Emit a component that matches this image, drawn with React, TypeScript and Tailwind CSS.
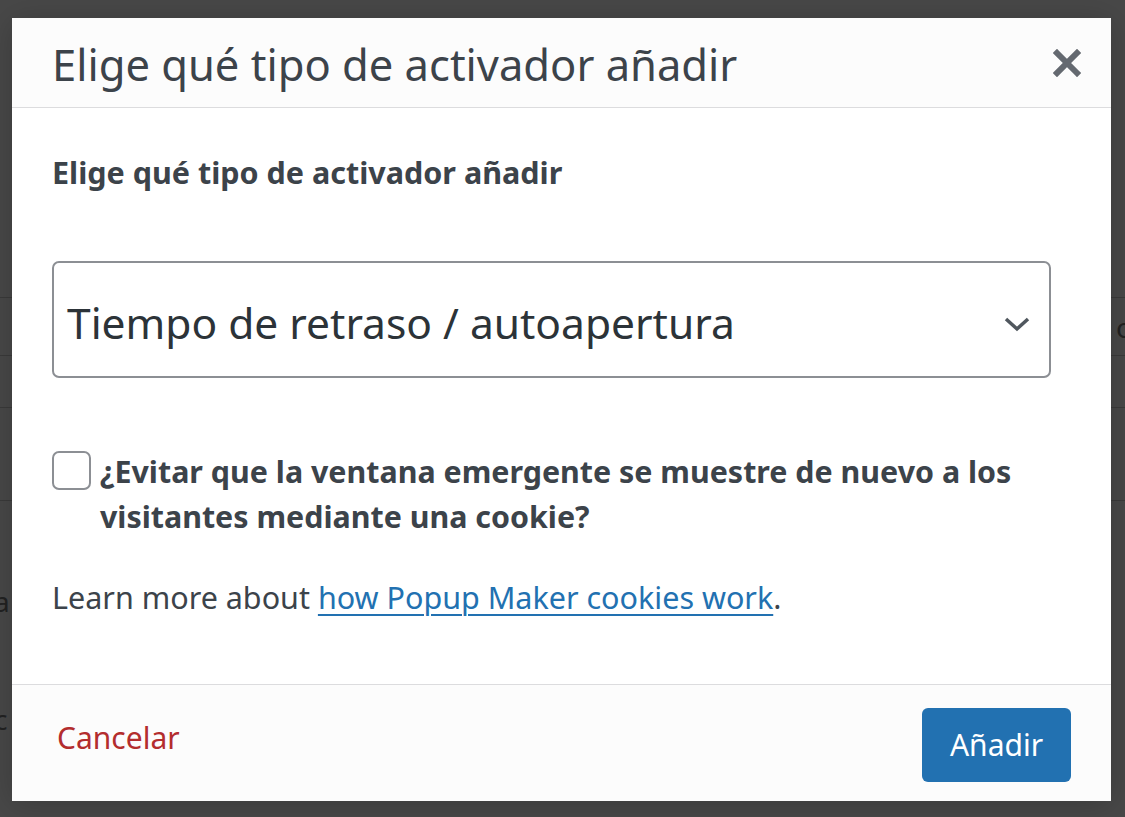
import React from "react";

const font = { fontFamily: '"Noto Sans", "Open Sans", Arial, sans-serif' };

export default function App() {
  return (
    <div className="relative w-[1125px] h-[817px] overflow-hidden bg-[#484848]" style={font}>
      {/* background page under overlay */}
      <div className="flex flex-col pt-[297px] text-[#1d1d1d] text-[28px]">
        <div className="h-[58px] border-t border-[#3a3a3a] flex items-center justify-end pr-0">
          <span className="text-[#222] mr-[-8px]">o</span>
        </div>
        <div className="h-[52px] border-t border-[#3a3a3a]" />
        <div className="h-[93px] border-t border-[#3a3a3a]" />
        <div className="h-[180px] border-t border-[#3a3a3a] flex items-center">
          <span className="text-[#222] ml-[-6px] mt-[20px]">a</span>
        </div>
        <div className="h-[60px] flex items-end">
          <span className="text-[#222] ml-[-6px]">c</span>
        </div>
      </div>

      {/* modal */}
      <div className="absolute left-[12px] top-[18px] w-[1099px] h-[783px] bg-white flex flex-col shadow-[0_3px_30px_rgba(0,0,0,0.2)]">
        <div className="h-[90px] bg-[#fcfcfc] border-b border-[#dcdcde] flex items-center justify-between pl-[40px] pr-[30px]">
          <h1 className="text-[43.5px] leading-none text-[#3c434a] font-normal pt-[4px]">
            Elige qué tipo de activador añadir
          </h1>
          <svg width="28" height="28" viewBox="0 0 28 28">
            <path d="M4 4 L24 24 M24 4 L4 24" stroke="#646970" strokeWidth="6" strokeLinecap="square" />
          </svg>
        </div>

        <div className="flex-1 flex flex-col pl-[40px] pr-[60px]">
          <div className="mt-[46px] text-[30.5px] font-bold text-[#3c434a] leading-[36px]">
            Elige qué tipo de activador añadir
          </div>
          <div className="mt-[71px] h-[117px] w-[999px] border-2 border-[#8c8f94] rounded-[7px] flex items-center justify-between pl-[13px] pr-[18px]">
            <span className="text-[42.5px] text-[#2c3338] mt-[6px]">Tiempo de retraso / autoapertura</span>
            <svg width="28" height="18" viewBox="0 0 28 18" className="mt-[8px]">
              <path d="M3 4 L14 14 L25 4" fill="none" stroke="#50575e" strokeWidth="3.5" />
            </svg>
          </div>
          <div className="mt-[73px] flex items-start gap-[9px]">
            <div className="w-[39px] h-[39px] shrink-0 border-2 border-[#8c8f94] rounded-[7px] bg-white" />
            <div className="text-[30.4px] font-bold text-[#3c434a] leading-[45px] mt-[-2px] w-[950px]">
              ¿Evitar que la ventana emergente se muestre de nuevo a los visitantes mediante una cookie?
            </div>
          </div>
          <div className="mt-[40px] text-[30.5px] text-[#3c434a] leading-[36px]">
            Learn more about{" "}
            <a className="text-[#2271b1] underline underline-offset-[5px] decoration-2">how Popup Maker cookies work</a>.
          </div>
        </div>

        <div className="h-[117px] bg-[#fcfcfc] border-t border-[#dcdcde] flex items-center justify-between pl-[45px] pr-[40px]">
          <span className="text-[30px] text-[#b32d2e] mt-[-12px]">Cancelar</span>
          <button className="w-[149px] h-[74px] rounded-[6px] bg-[#2271b1] text-white text-[30px] mt-[3px]">
            Añadir
          </button>
        </div>
      </div>
    </div>
  );
}
